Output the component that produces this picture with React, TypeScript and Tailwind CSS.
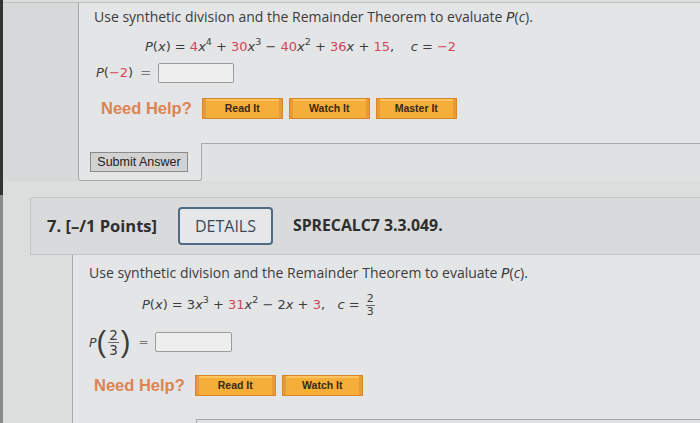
import type { ReactNode } from "react";

const red = "text-[#d2455a]";
const math = "font-['DejaVu_Sans',sans-serif]";

function Sup({ children }: { children: ReactNode }) {
  return <sup className="text-[9.5px]">{children}</sup>;
}

function Frac({ n, d, big }: { n: string; d: string; big?: boolean }) {
  return (
    <span
      className={`mx-[2px] inline-flex flex-col items-center align-middle ${
        big ? "text-[13.5px] leading-[14px]" : "text-[11px] leading-[12px]"
      }`}
    >
      <span className="px-[1px]">{n}</span>
      <span className="h-px w-full bg-[#666]" />
      <span>{d}</span>
    </span>
  );
}

function HelpButton({ label }: { label: string }) {
  return (
    <button className="flex h-[21px] w-[81px] items-center justify-center border border-[#d9862a] bg-[#f5ae3a] shadow-[inset_3px_0_0_#ea9a34,inset_-3px_0_0_#ea9a34,inset_0_2px_0_#fbc45e] font-['Liberation_Sans',Arial,sans-serif] text-[10.5px] font-bold text-[#3a2a12]">
      {label}
    </button>
  );
}

function NeedHelp({ labels }: { labels: string[] }) {
  return (
    <div className="flex items-center">
      <span className="font-['Liberation_Sans',Arial,sans-serif] text-[16.5px] font-bold text-[#dc8452]">
        Need Help?
      </span>
      <div className="ml-[10px] flex gap-[6px]">
        {labels.map((l) => (
          <HelpButton key={l} label={l} />
        ))}
      </div>
    </div>
  );
}

function AnswerBox({ w }: { w: string }) {
  return <span className={`${w} h-[20px] rounded-[2px] border border-[#9c9c9c] bg-[#eeeeee]`} />;
}

function Instruction() {
  return (
    <p className="h-[20px] font-['Open_Sans',sans-serif] text-[14px] leading-[20px] text-[#3c3c3c]">
      Use synthetic division and the Remainder Theorem to evaluate <i className={math}>P</i>(<i>c</i>).
    </p>
  );
}

export default function App() {
  return (
    <div className="flex h-[423px] w-[700px] overflow-hidden bg-[#dcdddd] text-[#3c3c3c]">
      <div className="flex w-[3px] shrink-0 flex-col">
        <div className="h-[195px] bg-[#333]" />
        <div className="flex-1 bg-[#8a8a8a]" />
      </div>
      <div className="flex flex-1 flex-col pt-[2px]">
        {/* question 6 */}
        <div className="flex border-t border-[#bdbdbd]">
          <div className="w-[75px] shrink-0 bg-[#d7d8d9]" />
          <div className="flex flex-1 flex-col">
            <div className="flex h-[140px] flex-col border-l border-[#a9a9a9] bg-[#e4e5e6] pl-[15px] pt-[4px]">
              <Instruction />
              <div className={`${math} mt-[10px] flex h-[20px] items-center pl-[51px] text-[13px] whitespace-pre`}>
                <i>P</i>(<i>x</i>) = <span className={red}>4</span>
                <i>x</i>
                <Sup>4</Sup> + <span className={red}>30</span>
                <i>x</i>
                <Sup>3</Sup> − <span className={red}>40</span>
                <i>x</i>
                <Sup>2</Sup> + <span className={red}>36</span>
                <i>x</i> + <span className={red}>15</span>,{"    "}
                <i>c</i> = <span className={red}>−2</span>
              </div>
              <div className={`${math} mt-[6px] flex h-[20px] items-center text-[13px] whitespace-pre`}>
                <span className="pl-[2px]">
                  <i>P</i>(<span className={red}>−2</span>)
                </span>
                <span className="ml-[7px] mr-[7px] text-[#777]">=</span>
                <AnswerBox w="w-[76px]" />
              </div>
              <div className="mt-[13px] pl-[7px]">
                <NeedHelp labels={["Read It", "Watch It", "Master It"]} />
              </div>
            </div>
            <div className="flex">
              <div className="flex h-[38px] w-[124px] shrink-0 items-start rounded-b-[3px] border-x border-b border-[#a9a9a9] bg-[#e4e5e6] pl-[11px] pt-[9px]">
                <button className="h-[20px] w-[98px] border border-[#8a8a8a] bg-[#d2d2d2] font-['Liberation_Sans',Arial,sans-serif] text-[12.5px] leading-[18px] text-[#222]">
                  Submit Answer
                </button>
              </div>
              <div className="flex-1 border-t border-[#a9a9a9] bg-[#e0e1e2]" />
            </div>
          </div>
        </div>

        {/* question 7 */}
        <div className="mt-[16px] flex flex-col">
          <div className="ml-[27px] flex h-[58px] items-center rounded-tl-[3px] border-y border-l border-[#c4c4c4] bg-[#d9dadb] pl-[16px] font-['Open_Sans',sans-serif] text-[#2e2e2e]">
            <span className="text-[16.5px] font-bold">7. [–/1 Points]</span>
            <span className="ml-[21px] flex h-[38px] w-[95px] items-center justify-center rounded-[4px] border-2 border-[#4f6a84] bg-[#e6e7e8] text-[16px] text-[#3a4a5a]">
              DETAILS
            </span>
            <span className="ml-[20px] text-[15.8px] font-bold">SPRECALC7 3.3.049.</span>
          </div>
          <div className="ml-[69px] flex h-[164px] flex-col border-l border-[#a9a9a9] bg-[#e4e5e6] pl-[16px] pt-[8px]">
            <Instruction />
            <div className={`${math} mt-[8px] flex h-[28px] items-center pl-[53px] text-[13px] whitespace-pre`}>
              <i>P</i>(<i>x</i>) = 3<i>x</i>
              <Sup>3</Sup> + <span className={red}>31</span>
              <i>x</i>
              <Sup>2</Sup> − 2<i>x</i> + <span className={red}>3</span>,{"   "}
              <i>c</i> = <Frac n="2" d="3" />
            </div>
            <div className={`${math} mt-[8px] flex h-[30px] items-center`}>
              <i className="mt-[2px] text-[12.5px]">P</i>
              <span className="font-['Liberation_Sans',sans-serif] text-[29px] leading-none">(</span>
              <Frac n="2" d="3" big />
              <span className="font-['Liberation_Sans',sans-serif] text-[29px] leading-none">)</span>
              <span className="ml-[8px] mr-[6px] text-[12px] text-[#777]">=</span>
              <AnswerBox w="w-[77px]" />
            </div>
            <div className="mt-[16px] pl-[5px]">
              <NeedHelp labels={["Read It", "Watch It"]} />
            </div>
          </div>
          <div className="flex">
            <div className="ml-[69px] h-[10px] w-[125px] shrink-0 border-x border-[#a9a9a9] bg-[#e4e5e6]" />
            <div className="flex-1 border-t border-[#a9a9a9] bg-[#e0e1e2]" />
          </div>
        </div>
      </div>
    </div>
  );
}
